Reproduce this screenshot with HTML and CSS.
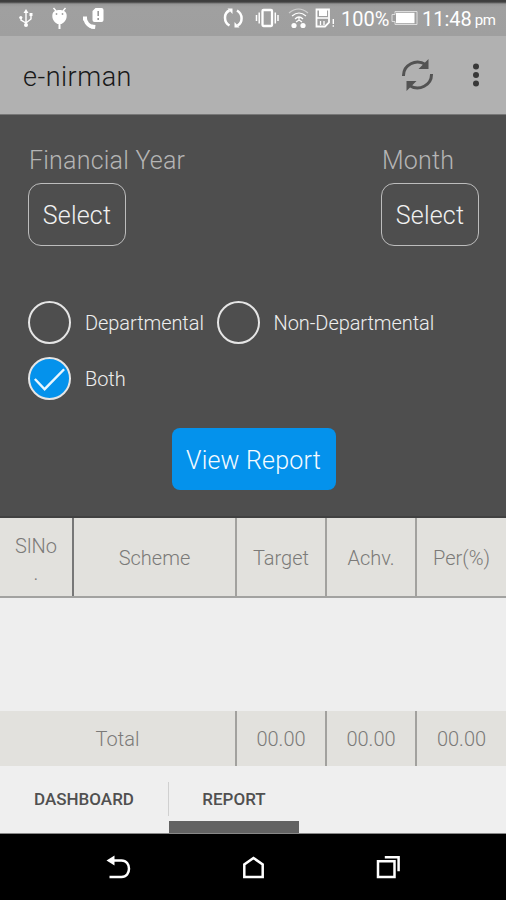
FILE: index.html
```html
<!DOCTYPE html>
<html lang="en">
<head>
<meta charset="utf-8">
<title>e-nirman</title>
<link rel="stylesheet" href="styles.css">
</head>
<body>
<div class="screen">
  <header class="status">
    <svg class="status-left" width="110" height="36" viewBox="0 0 110 36" fill="none" stroke="#fff" stroke-width="1.4">
      <path d="M26 11v13M21 17v3l5 3 5-4v-4"/><path d="M23.5 13 26 9l2.500 4z" fill="#fff" stroke="none"/><circle cx="26" cy="25" r="2" fill="#fff" stroke="none"/><circle cx="20.800" cy="17.500" r="1.600" fill="#fff" stroke="none"/><path d="M29.500 13h3v3h-3z" fill="#fff" stroke="none"/>
      <path d="M52.500 14C53.500 8.500 65.500 8.500 66.500 14c1 5-2 8.500-5 10h-4c-3-1.500-6-5-5-10z" fill="#fff" stroke="none"/><path d="M53.500 8l2.500 3M65.500 8 63 11"/><path d="M59.500 22v7" stroke-width="2"/><circle cx="56.500" cy="14" r=".9" fill="#a0a0a0" stroke="none"/><circle cx="62.500" cy="14" r=".9" fill="#a0a0a0" stroke="none"/>
      <path d="M85 17c0 5.500 4 10 9 10" stroke-width="3.600"/><path d="M83 16.500h4v4h-4zM91.500 24.500l4 .500-.500 4-4-.500z" fill="#fff" stroke="none"/><path d="M95.500 8h6q2 0 2 2v10q0 2-2 2h-7q-2 0-2-2v-9z" fill="#fff" stroke="none"/><path d="M98.200 11v5M98.200 18v2" stroke="#999" stroke-width="1.600"/>
    </svg>
    <div class="status-right">
      <svg width="116" height="36" viewBox="0 0 116 36" fill="none" stroke="#fff" stroke-width="2">
        <path d="M9.500 10.500C3.500 13 3.500 22 9.500 25.500M17 10.500C23 14 23 22.500 17.500 25.500" stroke-width="2.500"/><path d="M7.500 8.500h5v5.500zM19.500 27.500h-5V22z" fill="#fff" stroke="none"/>
        <rect x="42.500" y="10" width="9.500" height="16" rx="1" stroke-width="2.300"/><path d="M39.200 12.500v11M36.500 15v6M55.300 12.500v11M58 15v6" stroke-width="1.500"/>
        <g stroke-width="1.200"><path d="M69 13q9.500-8 19 0" opacity=".5"/><path d="M72 16q7-6 14 0M75 19q4-4 8 0"/></g><path d="M79 17v4M76 22l3-2 3 2" stroke-width="1.300"/><circle cx="74" cy="25.500" r="2.600" fill="#fff" stroke="none"/><circle cx="83" cy="25.500" r="2.600" fill="#fff" stroke="none"/>
        <path d="M96.500 9.500h12.500v13l-4 4h-8.500z" stroke-width="1.800"/><path d="M99 10h8v6h-8z" fill="#fff" stroke="none"/><path d="M97 18h11M100.500 21v4M104 21v4" stroke-width="1.300"/><path d="M113.300 19v5M113.300 25.200v1.600" stroke-width="1.400"/>
      </svg>
      <span class="percent">100%</span>
      <svg width="28" height="36" viewBox="0 0 28 36"><path d="M4 11.500h22v13H4v-3H1v-7h3z" fill="none" stroke="#ddd"/><path d="M5 12.800h18.500v10.400H5z" fill="#fff"/></svg>
      <span class="clock">11:48</span><span class="pm">pm</span>
    </div>
  </header>
  <div class="appbar">
    <h1 class="title">e-nirman</h1>
    <svg class="refresh" width="34" height="34" viewBox="0 0 34 34" fill="none" stroke="#535353" stroke-width="3"><path d="M2.500 18A14 13.500 0 0 1 24.500 6.500M30.500 16A14 13.500 0 0 1 8.500 27.500"/><path d="M27.500 1v10H17.500zM5.500 33V23H15.500z" fill="#535353" stroke="none"/></svg>
    <svg class="more" width="8" height="26" viewBox="0 0 8 26" fill="#383838"><circle cx="4" cy="4.500" r="3"/><circle cx="4" cy="13" r="3"/><circle cx="4" cy="21.500" r="3"/></svg>
  </div>
  <main class="form">
    <div class="fields">
      <div class="field"><span class="label">Financial Year</span><button class="select">Select</button></div>
      <div class="field month"><span class="label">Month</span><button class="select">Select</button></div>
    </div>
    <div class="options">
      <div class="option dept"><span class="radio"></span><span>Departmental</span></div>
      <div class="option"><span class="radio"></span><span class="non">Non-Departmental</span></div>
      <div class="option"><span class="radio checked"><svg width="39" height="39" viewBox="0 0 40 40" fill="none" stroke="#e9f6ff" stroke-width="2.500"><path d="M5 20.500 15 31 35 10.500"/></svg></span><span class="both">Both</span></div>
    </div>
    <button class="view">View Report</button>
  </main>
  <div class="row head">
    <div class="cell serial"><span>SlNo<br>.</span></div><div class="cell">Scheme</div><div class="cell">Target</div><div class="cell">Achv.</div><div class="cell">Per(%)</div>
  </div>
  <div class="empty"></div>
  <div class="row total">
    <div class="cell">Total</div><div class="cell">00.00</div><div class="cell">00.00</div><div class="cell">00.00</div>
  </div>
  <nav class="tabs"><div class="tab dashboard">DASHBOARD</div><div class="tab active">REPORT</div></nav>
  <footer class="nav">
    <svg width="28" height="28" viewBox="0 0 28 28" fill="none" stroke="#fff" stroke-width="2.500"><path d="M7 6.500h9.500c10 0 10 16.500 0 16.500H4.500"/><path d="M1.500 6.500l8-5v10z" fill="#fff" stroke="none"/></svg>
    <svg width="28" height="28" viewBox="0 0 28 28" fill="none" stroke="#fff" stroke-width="2.500"><path d="M4.300 23V10.500L13.500 4 22.700 10.500V23z"/></svg>
    <svg width="28" height="28" viewBox="0 0 28 28" fill="none" stroke="#fff" stroke-width="2.500"><path d="M3 7.200h16.500V23H3zM9.800 3.200h13.800v14"/></svg>
  </footer>
</div>
</body>
</html>
```

FILE: styles.css
```css
* { box-sizing: border-box; }
body { margin: 0; font-family: Roboto, "Liberation Sans", sans-serif; font-weight: 300; background: #eeeeee; }
button { font: inherit; padding: 0; }
svg { display: block; flex: none; }
.screen { width: 506px; height: 900px; display: flex; flex-direction: column; overflow: hidden; }
.status { height: 36px; flex: none; display: flex; justify-content: space-between; background: linear-gradient(#3d3d3d 0, #414141 2px, #969696 4px, #a0a0a0 7px, #9f9f9f 100%); color: #fff; }
.status-right { display: flex; align-items: center; width: 286px; }
.percent, .clock { font-size: 20px; font-weight: 400; line-height: 39px; height: 36px; white-space: nowrap; }
.percent { width: 55px; padding-left: 5px; flex: none; }
.clock { margin-left: 3px; }
.pm { font-size: 15px; font-weight: 400; line-height: 41px; height: 36px; margin-left: 3px; letter-spacing: -.6px; }
.appbar { height: 79px; flex: none; display: flex; align-items: center; background: #b1b1b1; border-bottom: 1px solid #777; padding-left: 23px; }
.title { flex: 1; margin: 0; padding-top: 3px; font-size: 27px; font-weight: 300; color: #191919; letter-spacing: .5px; }
.refresh { margin-right: 37px; }
.more { margin-right: 26px; }
.form { height: 403px; flex: none; display: flex; flex-direction: column; background: #4e4e4e; padding: 30px 27px 25px 28px; border-bottom: 2px solid #414141; }
.fields { display: flex; justify-content: space-between; height: 101px; flex: none; }
.field { display: flex; flex-direction: column; }
.label { height: 38px; line-height: 31px; font-size: 25px; color: #b5b5b5; letter-spacing: .22px; padding-left: 1px; }
.select { width: 98px; height: 63px; border: 1.500px solid #bdbdbd; border-radius: 13px; background: transparent; color: #f1f1f1; font-size: 25px; letter-spacing: .2px; padding-top: 2px; }
.options { display: flex; flex-wrap: wrap; align-content: flex-start; margin-top: 54px; row-gap: 12px; height: 128px; flex: none; }
.option { display: flex; align-items: center; height: 44px; color: #eee; font-size: 20px; letter-spacing: -.07px; }
.option span:last-child { padding-top: 2px; }
.dept { width: 188.500px; }
.radio { width: 43px; height: 43px; flex: none; border: 2px solid #e5e5e5; border-radius: 50%; margin-right: 14px; }
.radio.checked { background: #0492ec; }
.view { width: 164px; height: 62px; align-self: center; border: 0; border-radius: 8px; background: #0492ec; color: #f5fbff; font-size: 25px; letter-spacing: .2px; padding-top: 2px; flex: none; }
.row { display: grid; flex: none; background: #e2e1dd; color: #7b7a78; font-size: 20px; }
.head { height: 80px; grid-template-columns: 74px 163px 90px 90px 89px; border-bottom: 2px solid #a2a2a0; }
.cell { display: flex; align-items: center; justify-content: center; border-right: 2px solid #a2a19e; padding-top: 1px; }
.cell:last-child { border-right: 0; }
.serial { border-right-color: #777; text-align: center; line-height: 27px; padding-top: 5px; }
.empty { height: 113px; flex: none; background: #eeeeee; }
.total { height: 55px; grid-template-columns: 237px 90px 90px 89px; }
.tabs { height: 68px; flex: none; display: flex; border-bottom: 1px solid #888; background: #efefef; }
.tab { line-height: 67px; font-size: 17px; font-weight: 500; color: #505050; text-align: center; }
.dashboard { width: 169px; padding-right: 1px; background: linear-gradient(#d0d0d0, #d0d0d0) right 16px / 1px 34px no-repeat; }
.active { width: 130px; background: linear-gradient(#626262, #626262) bottom / 100% 12px no-repeat; }
.nav { height: 66px; flex: none; display: flex; background: #000; padding: 20px 0 0 105px; gap: 107px; }
```
